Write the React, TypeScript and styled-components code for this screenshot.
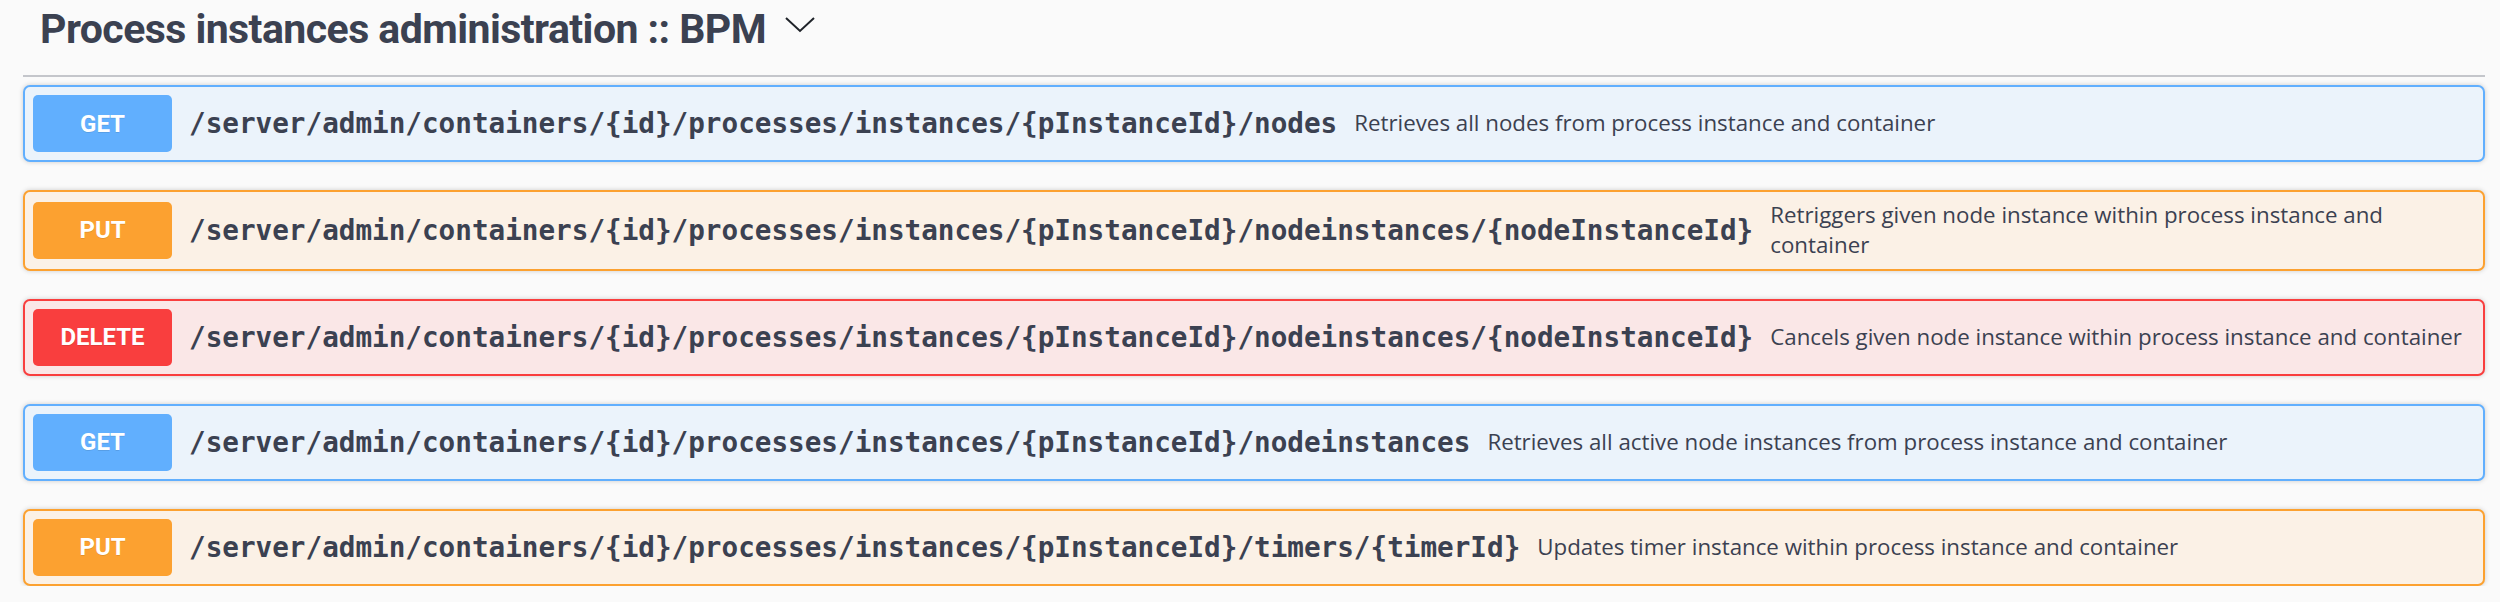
import * as React from 'react';
import styled, { createGlobalStyle } from 'styled-components';

type Method = 'GET' | 'PUT' | 'DELETE';

interface Operation {
  method: Method;
  path: string;
  summary: string;
}

const methodColors: Record<Method, { main: string; bg: string }> = {
  GET: { main: '#61affe', bg: '#ebf3fb' },
  PUT: { main: '#fca130', bg: '#fbf1e6' },
  DELETE: { main: '#f93e3e', bg: '#fae7e7' }
};

const base = '/server/admin/containers/{id}/processes/instances/{pInstanceId}';

const operations: Operation[] = [
  { method: 'GET', path: `${base}/nodes`, summary: 'Retrieves all nodes from process instance and container' },
  {
    method: 'PUT',
    path: `${base}/nodeinstances/{nodeInstanceId}`,
    summary: 'Retriggers given node instance within process instance and container'
  },
  {
    method: 'DELETE',
    path: `${base}/nodeinstances/{nodeInstanceId}`,
    summary: 'Cancels given node instance within process instance and container'
  },
  {
    method: 'GET',
    path: `${base}/nodeinstances`,
    summary: 'Retrieves all active node instances from process instance and container'
  },
  {
    method: 'PUT',
    path: `${base}/timers/{timerId}`,
    summary: 'Updates timer instance within process instance and container'
  }
];

const GlobalStyle = createGlobalStyle`
  html, body {
    margin: 0;
    padding: 0;
    background: #fafafa;
  }
  body {
    font-family: "Open Sans", sans-serif;
    color: #3b4151;
  }
`;

const App = () => {
  return (
    <>
      <GlobalStyle />
      <Section>
        <TagHeader>
          <TagTitle>Process instances administration :: BPM</TagTitle>
          <Arrow width='32' height='18' viewBox='0 0 32 18'>
            <polyline points='2,2 16,15 30,2' fill='none' stroke='#1f2329' strokeWidth='2' />
          </Arrow>
        </TagHeader>
        <List>
          {operations.map((op, i) => (
            <Block key={i} method={op.method}>
              <Badge method={op.method}>{op.method}</Badge>
              <Path>{op.path}</Path>
              <Summary>{op.summary}</Summary>
            </Block>
          ))}
        </List>
      </Section>
    </>
  );
};

export default App;

const Section = styled.div`
  padding: 0 15px 0 23px;
`;

const TagHeader = styled.div`
  display: flex;
  align-items: center;
  height: 77px;
  box-sizing: border-box;
  padding: 6px 0 23px 17px;
  border-bottom: 2px solid rgba(59, 65, 81, 0.28);
  margin-bottom: 8px;
`;

const TagTitle = styled.h4`
  margin: 0;
  font-family: Roboto, "Open Sans", sans-serif;
  font-weight: 700;
  font-size: 41px;
  line-height: 48px;
  letter-spacing: -0.55px;
  color: #3b4151;
`;

const Arrow = styled.svg`
  margin-left: 18px;
  margin-bottom: 9px;
  flex-shrink: 0;
`;

const List = styled.div`
  display: flex;
  flex-direction: column;
  gap: 28px;
`;

const Block = styled.div<{ method: Method }>`
  display: flex;
  align-items: center;
  padding: 8px;
  border: 2px solid ${p => methodColors[p.method].main};
  background: ${p => methodColors[p.method].bg};
  border-radius: 7px;
  box-shadow: 0 0 5px rgba(0, 0, 0, 0.19);
`;

const Badge = styled.span<{ method: Method }>`
  flex-shrink: 0;
  display: flex;
  align-items: center;
  justify-content: center;
  width: 139px;
  height: 57px;
  border-radius: 5px;
  background: ${p => methodColors[p.method].main};
  color: #fff;
  font-family: Roboto, "Open Sans", sans-serif;
  font-weight: 700;
  font-size: 24px;
  text-shadow: 0 1px 0 rgba(0, 0, 0, 0.1);
`;

const Path = styled.span`
  flex-shrink: 0;
  padding: 0 17px;
  font-family: "DejaVu Sans Mono", "Liberation Mono", monospace;
  font-weight: 700;
  font-size: 27.65px;
  color: #3b4151;
  white-space: nowrap;
`;

const Summary = styled.div`
  flex: 1;
  font-family: "Open Sans", sans-serif;
  font-size: 22.3px;
  line-height: 30.4px;
  color: #3b4151;
`;
